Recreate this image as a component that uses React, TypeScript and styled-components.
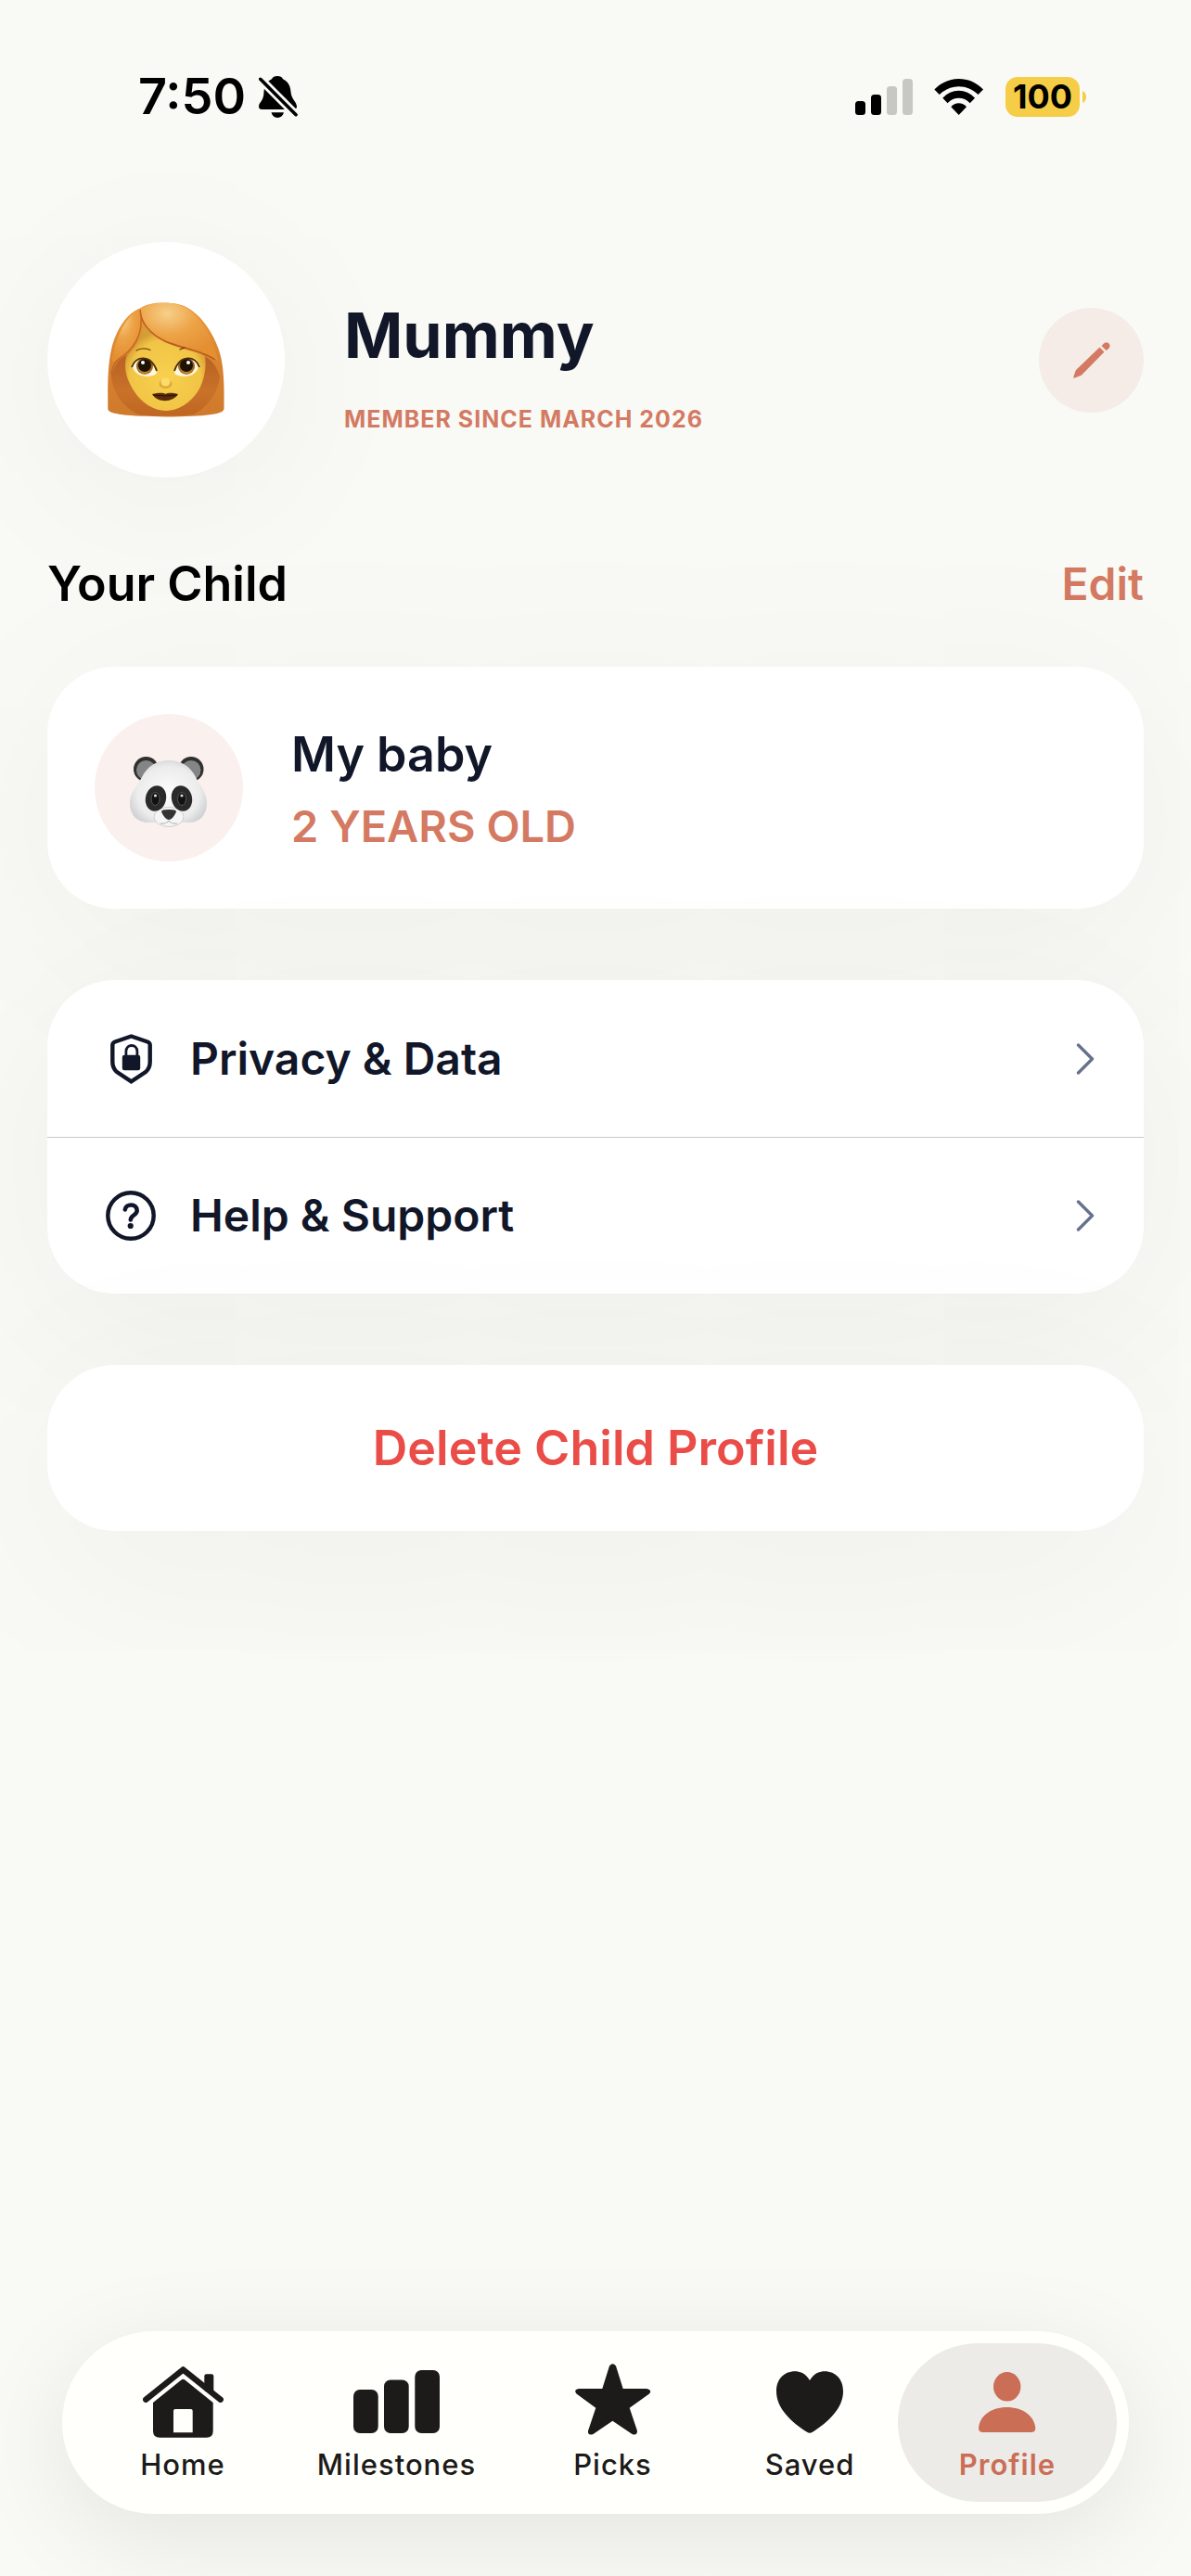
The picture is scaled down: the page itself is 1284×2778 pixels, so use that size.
import React from "react";
import styled, { createGlobalStyle } from "styled-components";

const color = {
  page: "#f9faf6",
  ink: "#111729",
  accent: "#d47a63",
  accentStrong: "#ca6e55",
  danger: "#ea4c48",
  muted: "#66728c",
  tab: "#1c1b19",
};

const GlobalStyle = createGlobalStyle`
  *, *::before, *::after { box-sizing: border-box; }
  body {
    margin: 0;
    background: ${color.page};
    font-family: Inter, "Liberation Sans", sans-serif;
    color: ${color.ink};
  }
  h1, h2, h3, p { margin: 0; }
  button {
    border: 0;
    padding: 0;
    background: none;
    font: inherit;
    color: inherit;
    cursor: pointer;
  }
  a { color: inherit; text-decoration: none; }
  svg { display: block; flex: none; }
`;

const Page = styled.div`
  min-height: 100vh;
  display: flex;
  flex-direction: column;
  overflow: hidden;
`;

const StatusBar = styled.header`
  display: flex;
  justify-content: space-between;
  align-items: center;
  padding: 72px 113px 0 149px;
  color: #000;
`;

const StatusGroup = styled.div<{ $gap: number }>`
  display: flex;
  align-items: center;
  gap: ${(p) => p.$gap}px;
`;

const Clock = styled.time`
  font-size: 54px;
  line-height: 64px;
  font-weight: 600;
`;

const Battery = styled.div`
  display: flex;
  align-items: center;
  gap: 3px;
`;

const BatteryLevel = styled.span`
  width: 80px;
  border-radius: 13px;
  background: #f6cd46;
  font-size: 36px;
  line-height: 43px;
  font-weight: 700;
  text-align: center;
`;

const Content = styled.main`
  flex: 1;
  padding: 125px 51px 80px;
`;

const ProfileRow = styled.section`
  display: flex;
  align-items: center;
  gap: 64px;
`;

const Avatar = styled.div`
  display: grid;
  place-items: center;
  flex: none;
  width: 256px;
  height: 254px;
  border-radius: 50%;
  background: #fff;
  box-shadow: 0 24px 180px rgba(0, 0, 0, 0.05);
`;

const ProfileText = styled.div`
  flex: 1;
  display: flex;
  flex-direction: column;
  gap: 28px;
`;

const Name = styled.h1`
  font-size: 68px;
  line-height: 100px;
  font-weight: 700;
`;

const Since = styled.p`
  font-size: 25px;
  line-height: 26px;
  font-weight: 700;
  letter-spacing: 1px;
  text-transform: uppercase;
  color: ${color.accent};
`;

const RoundButton = styled.button`
  display: grid;
  place-items: center;
  width: 113px;
  height: 113px;
  border-radius: 50%;
  background: #f5ece8;
  color: ${color.accent};
`;

const SectionHead = styled.div`
  display: flex;
  justify-content: space-between;
  align-items: center;
  margin: 83px 0 57px;
`;

const SectionTitle = styled.h2`
  font-size: 52px;
  line-height: 64px;
  font-weight: 600;
  color: #000;
`;

const TextButton = styled.button`
  font-size: 48px;
  line-height: 64px;
  font-weight: 600;
  color: ${color.accent};
`;

const Stack = styled.div`
  display: flex;
  flex-direction: column;
  gap: 77px;
`;

const Card = styled.section`
  border-radius: 72px;
  background: #fff;
  box-shadow: 0 36px 220px rgba(0, 0, 0, 0.05);
`;

const ChildCard = styled(Card)`
  display: flex;
  align-items: center;
  gap: 52px;
  padding: 51px;
`;

const ChildAvatar = styled.div`
  display: grid;
  place-items: center;
  width: 160px;
  height: 159px;
  border-radius: 50%;
  background: #faf0ee;
`;

const ChildName = styled.h3`
  font-size: 52px;
  line-height: 82px;
  font-weight: 600;
`;

const ChildAge = styled.p`
  font-size: 47px;
  line-height: 72px;
  font-weight: 600;
  text-transform: uppercase;
  color: ${color.accent};
`;

const MenuRow = styled.a`
  display: flex;
  align-items: center;
  gap: 37px;
  min-height: 169px;
  padding: 0 53px 0 63px;
  font-size: 48px;
  line-height: 64px;
  font-weight: 600;

  & + & {
    border-top: 1px solid #c6c8ca;
  }
`;

const MenuIcon = styled.span`
  display: grid;
  place-items: center;
  width: 54px;
`;

const MenuLabel = styled.span`
  flex: 1;
`;

const DeleteButton = styled.button`
  width: 100%;
  border-radius: 72px;
  font-size: 52px;
  line-height: 179px;
  font-weight: 600;
  color: ${color.danger};
`;

const TabBar = styled.nav`
  position: sticky;
  bottom: 67px;
  display: grid;
  grid-template-columns: 230fr 231fr 235fr 190fr 236fr;
  margin: 0 67px 67px;
  padding: 13px 13px 13px 15px;
  border-radius: 99px;
  background: #fffffb;
  box-shadow: 0 24px 110px rgba(0, 0, 0, 0.09);
`;

const Tab = styled.a<{ $active?: boolean }>`
  display: flex;
  flex-direction: column;
  align-items: center;
  gap: 9px;
  padding: 22px 0;
  border-radius: 86px;
  background: ${(p) => (p.$active ? "#ecebe8" : "transparent")};
  color: ${(p) => (p.$active ? color.accentStrong : color.tab)};
  font-size: 31px;
  line-height: 36px;
  font-weight: ${(p) => (p.$active ? 600 : 500)};
  letter-spacing: 1px;
`;

const TabIcon = styled.span`
  display: grid;
  place-items: center;
  height: 82px;
`;

const BellOff = () => (
  <svg width="42" height="45" viewBox="0 0 42 45" role="img" aria-label="Silent">
    <path
      fill="currentColor"
      d="M20 0C23 0 25 1.2 26 3.2C32 6 34 11 34.5 17C35 25 41 28 41 33Q41 36 37 36H3.5Q0 36 0 33C0 28 5.5 27 5.5 17C6 11 8 6 14 3.2C15 1.2 17 0 20 0ZM13.5 39.3H27C26 43 23.500 45 20.200 45S14.500 43 13.500 39.300Z"
    />
    <path d="M1.700 3.300L40 41.700" stroke={color.page} strokeWidth="9" />
    <path d="M1.700 3.300L40 41.700" stroke="currentColor" strokeWidth="3.600" strokeLinecap="round" />
  </svg>
);

const Signal = () => (
  <svg width="62" height="39" viewBox="0 0 62 39" role="img" aria-label="Signal">
    <rect x="0" y="24" width="11" height="15" rx="3.500" />
    <rect x="17" y="17" width="11" height="22" rx="3.500" />
    <rect x="34" y="8" width="11" height="31" rx="3.500" fill="#c7c8c4" />
    <rect x="51" y="0" width="11" height="39" rx="3.500" fill="#c7c8c4" />
  </svg>
);

const Wifi = () => (
  <svg width="54" height="39" viewBox="0 0 54 39" role="img" aria-label="Wi-Fi">
    <path d="M.3 11.500C15-3.800 38.300-3.800 53 11.500L47.500 17C36 5.200 17.300 5.200 5.800 17Z" />
    <path d="M9.300 20.800C18.500 10 34.800 10 44 20.800L38.700 26.300C32 19 21.300 19 14.600 26.300Z" />
    <path d="M18.300 30.200C22.500 25 30.800 25 35 30.200L26.700 39Z" />
  </svg>
);

const BatteryNub = () => (
  <svg width="4" height="13" viewBox="0 0 4 13" aria-hidden="true">
    <path fill="#f6cd46" d="M0 0C2.500 1 4 3.500 4 6.500S2.500 12 0 13Z" />
  </svg>
);

const WomanFace = () => (
  <svg width="126" height="124" viewBox="0 0 126 124" role="img" aria-label="Woman with red hair">
    <defs>
      <linearGradient id="hairBack" x1="0" y1="0" x2="0" y2="1">
        <stop offset="0" stopColor="#ec9c3c" />
        <stop offset=".5" stopColor="#d9822f" />
        <stop offset="1" stopColor="#cf7a2c" />
      </linearGradient>
      <linearGradient id="hairShade" x1="0" y1="0" x2="0" y2="1">
        <stop offset="0" stopColor="#ad5420" />
        <stop offset=".6" stopColor="#c56e28" />
        <stop offset="1" stopColor="#b9601f" />
      </linearGradient>
      <radialGradient id="skin" cx=".5" cy=".6" r=".55">
        <stop offset="0" stopColor="#f8d04e" />
        <stop offset=".8" stopColor="#f1c446" />
        <stop offset="1" stopColor="#d59d33" />
      </radialGradient>
      <radialGradient id="fringe" cx=".35" cy=".18" r=".75">
        <stop offset="0" stopColor="#f6d08a" />
        <stop offset=".5" stopColor="#eda347" />
        <stop offset="1" stopColor="#e58f33" />
      </radialGradient>
      <radialGradient id="iris" cx=".5" cy=".7" r=".6">
        <stop offset="0" stopColor="#d49a3e" />
        <stop offset="1" stopColor="#8a5518" />
      </radialGradient>
    </defs>
    <path
      fill="url(#hairBack)"
      d="M36 6C44-1 76-2 88 7C106 18 122 46 124 70C126 86 125.500 102 125.500 115C125 121 105 123 63 123.500C22 123 0 121 .3 115C.3 95-.5 72 4 51C9 30 20 12 36 6Z"
    />
    <path fill="url(#hairShade)" d="M4 80C8 64 15 56 30 56H96C108 58 116 64 121 80C119 100 104 116 92 121C74 123 50 123 34 121C20 116 6 100 4 80Z" opacity=".75" />
    <path fill="url(#skin)" d="M38 26C60 34 84 44 105 58C107 70 104 85 98 95C90 108 76 117 63 117S36 108 28 95C21 84 17 72 20 59C28 50 36 42 38 26Z" />
    <path fill="url(#fringe)" d="M35 8C42 0 76-4 90 10C106 23 114 42 119 63C106 54 76 52 58 41C48 36 36 26 35 8Z" />
    <path fill="none" stroke="#b65b1c" strokeWidth="1.500" d="M35 8C36 26 50 36 62 42C78 49 102 52 116 62" />
    <path fill="url(#fringe)" d="M35 8C24 10 10 32 5 60C4 66 8 64 12 61C24 54 42 38 35 8Z" />
    <path fill="none" stroke="#bd6420" strokeWidth="1.300" d="M35 8C41 36 25 53 12 61C8 64 5 70 4 78" />
    <path fill="none" stroke="#7a4a12" strokeWidth="1.300" strokeLinecap="round" d="M31 52C35 49.500 42 49 46 51.500M78 51Q80 49.500 83 49" />
    {[
      { x: 40, flip: 1 },
      { x: 85, flip: -1 },
    ].map((eye) => (
      <g key={eye.x} transform={`translate(${eye.x} 69) scale(${eye.flip} 1)`}>
        <path fill="#fff8e0" d="M-13 1C-10-12 8-13 13 7C11 12-9 14-13 1Z" />
        <circle cx="0" cy="0" r="9" fill="url(#iris)" />
        <circle cx="0" cy="-1" r="7" fill="#1e1204" />
        <circle cx="-2" cy="-4" r="2" fill="#fff" />
        <path fill="none" stroke="#4a2c08" strokeWidth="1.800" d="M-14 1C-10-12 7-13 13 5" />
      </g>
    ))}
    <ellipse cx="62.500" cy="88" rx="7" ry="5" fill="#dfa937" />
    <ellipse cx="62.500" cy="86" rx="5" ry="4.500" fill="#fadb6c" />
    <path fill="#5b2c0c" d="M48 99C54 98 59 97 62.500 99C66 97 71 98 76 99C71 108 54 109 48 99Z" />
    <path fill="none" stroke="#2d1204" strokeWidth="1" d="M49 100Q62 102 75 100" />
  </svg>
);

const Panda = () => (
  <svg width="84" height="84" viewBox="0 -7 84 84" role="img" aria-label="Panda">
    <defs>
      <radialGradient id="pandaHead" cx=".5" cy=".5" r=".58">
        <stop offset="0" stopColor="#fdfdfd" />
        <stop offset=".7" stopColor="#ececec" />
        <stop offset="1" stopColor="#c9cbcd" />
      </radialGradient>
    </defs>
    {[17.5, 66].map((x) => (
      <g key={x}>
        <circle cx={x} cy="14.500" r="13.500" fill="#2f3030" />
        <circle cx={x} cy="15.500" r="10.500" fill="#858585" />
      </g>
    ))}
    <path
      fill="url(#pandaHead)"
      d="M42 5C55 5 65 11 71 23C76 33 83 40 83 51C83 64 75 72 64 72H56C52 73 48 76.700 42 76.700S32 73 28 72H20C8 72 0 64 0 51C0 40 8 33 13 23C19 11 29 5 42 5Z"
    />
    <ellipse cx="42" cy="66" rx="16" ry="10.500" fill="#f5f5f5" stroke="#cfcfcf" strokeWidth="1" />
    <ellipse cx="28" cy="46" rx="11" ry="14" fill="#2a2a2a" transform="rotate(14 28 46)" />
    <ellipse cx="56" cy="46" rx="11" ry="14" fill="#2a2a2a" transform="rotate(-14 56 46)" />
    {[27.5, 56].map((x) => (
      <g key={x}>
        <ellipse cx={x} cy="46.500" rx="4.500" ry="7" fill="#111" stroke="#555" strokeWidth="1" />
        <circle cx={x} cy="43" r="1.600" fill="#ddd" />
      </g>
    ))}
    <path fill="#333" d="M34 60Q34 58 42 58T50 60C49 64 45 69 42 69S35 64 34 60Z" />
    <path fill="none" stroke="#b9b9b9" strokeWidth="1.200" d="M33 73Q39 74 42 70Q45 74 51 73" />
  </svg>
);

const Pencil = () => (
  <svg width="40" height="39" viewBox="0 0 40 39" fill="currentColor" aria-hidden="true">
    <path d="M28.500 5.500L33.500 10.500L9.500 35Q8.500 36 7 36.600L1 38.700Q0 38.600.3 37.500L2.500 31Q3 29.800 4 28.900Z" />
    <path d="M30.500 4L33 1.500Q35.800-.9 38.500 1.500Q40.700 4.200 38.400 6.700L35.700 9Z" />
  </svg>
);

const ShieldLock = () => (
  <svg width="45" height="54" viewBox="0 0 45 54" fill="none" stroke="currentColor" aria-hidden="true">
    <path
      strokeWidth="4.400"
      d="M22.500 2.500L40 8.500Q42.700 9.500 42.700 12V30C42.700 36 41 38.500 38 41L22.500 51.300L7 41C4 38.500 2.300 36 2.300 30V12Q2.300 9.500 5 8.500Z"
    />
    <path strokeWidth="2.800" d="M16.900 24V19C16.900 10.300 28.900 10.300 28.900 19V24" />
    <rect x="12.800" y="22.700" width="19.400" height="16.600" rx="2.400" fill="currentColor" stroke="none" />
  </svg>
);

const HelpCircle = () => (
  <svg width="54" height="54" viewBox="0 0 54 54" fill="none" stroke="currentColor" aria-hidden="true">
    <circle cx="27" cy="27" r="24.700" strokeWidth="4.400" />
    <path strokeWidth="4.600" strokeLinecap="round" d="M20.800 20.500C21.500 13.700 33.700 13.700 33.700 21.500C33.700 26.500 26.800 26.500 26.800 31.500" />
    <circle cx="26.700" cy="38" r="3.100" fill="currentColor" stroke="none" />
  </svg>
);

const Chevron = () => (
  <svg width="20" height="34" viewBox="0 0 20 34" fill="none" aria-hidden="true">
    <path d="M2.500 2L17.500 17L2.500 32" stroke={color.muted} strokeWidth="3.400" strokeLinecap="round" strokeLinejoin="round" />
  </svg>
);

const HomeIcon = () => (
  <svg width="87" height="77" viewBox="0 0 87 77" fill="currentColor" aria-hidden="true">
    <path d="M66.300 26V10.500Q66.300 8.300 68.500 8.300H74Q76.300 8.300 76.300 10.500V32Z" />
    <path fill="none" stroke="currentColor" strokeWidth="6.400" strokeLinecap="round" strokeLinejoin="round" d="M3.200 35.700L43.400 3.400L83.700 35.700" />
    <path fillRule="evenodd" d="M41.500 14.500Q43.400 13 45.300 14.500L75.700 39V69.500Q75.700 76.800 68.500 76.800H18.200Q11 76.800 11 69.500V39ZM35 46Q33 46 33 48V71.300H53.700V48Q53.700 46 51.700 46Z" />
  </svg>
);

const BarsIcon = () => (
  <svg width="93" height="69" viewBox="0 0 93 69" fill="currentColor" aria-hidden="true">
    <rect x="0" y="21" width="26.700" height="47" rx="7" />
    <rect x="33" y="10.500" width="26.700" height="57.500" rx="7" />
    <rect x="66.300" y="0" width="26.700" height="68" rx="7" />
  </svg>
);

const StarIcon = () => (
  <svg width="82" height="83" viewBox="0 0 82 83" fill="currentColor" aria-hidden="true">
    <path d="M37 2.500Q40.500-2 44 2.500L51.700 27H77Q83.500 28.500 80 32.500L58.700 47.700L67 72.500Q67 78 61.500 76L40.400 61.700L19.500 76Q13.500 78 14 72.500L22.300 47.700L1.500 32.500Q-2 28 4 27H29.300Z" />
  </svg>
);

const HeartIcon = () => (
  <svg width="72" height="67" viewBox="0 0 72 67" fill="currentColor" aria-hidden="true">
    <path d="M36 10C41 2 47 .3 52 .3C64 .3 72 9 72 22C72 40 56 55 39 65.800Q36 67.500 33 65.800C16 55 0 40 0 22C0 9 8 .3 20 .3C25 .3 31 2 36 10Z" />
  </svg>
);

const PersonIcon = () => (
  <svg width="62" height="65" viewBox="0 0 62 65" fill="currentColor" aria-hidden="true">
    <ellipse cx="30.700" cy="15.800" rx="14.700" ry="15.800" />
    <path d="M5 65Q0 65 0 60.500C1 47 14 38 30.600 38S60 47 61.300 60.500Q61.300 65 56.500 65Z" />
  </svg>
);

const menu = [
  { label: "Privacy & Data", icon: <ShieldLock /> },
  { label: "Help & Support", icon: <HelpCircle /> },
];

const tabs = [
  { label: "Home", icon: <HomeIcon /> },
  { label: "Milestones", icon: <BarsIcon /> },
  { label: "Picks", icon: <StarIcon /> },
  { label: "Saved", icon: <HeartIcon /> },
  { label: "Profile", icon: <PersonIcon />, active: true },
];

export default function App() {
  return (
    <>
      <GlobalStyle />
      <Page>
        <StatusBar>
          <StatusGroup $gap={14}>
            <Clock>7:50</Clock>
            <BellOff />
          </StatusGroup>
          <StatusGroup $gap={23}>
            <Signal />
            <Wifi />
            <Battery>
              <BatteryLevel>100</BatteryLevel>
              <BatteryNub />
            </Battery>
          </StatusGroup>
        </StatusBar>

        <Content>
          <ProfileRow>
            <Avatar>
              <WomanFace />
            </Avatar>
            <ProfileText>
              <Name>Mummy</Name>
              <Since>Member since March 2026</Since>
            </ProfileText>
            <RoundButton aria-label="Edit profile">
              <Pencil />
            </RoundButton>
          </ProfileRow>

          <SectionHead>
            <SectionTitle>Your Child</SectionTitle>
            <TextButton>Edit</TextButton>
          </SectionHead>

          <Stack>
            <ChildCard>
              <ChildAvatar>
                <Panda />
              </ChildAvatar>
              <div>
                <ChildName>My baby</ChildName>
                <ChildAge>2 years old</ChildAge>
              </div>
            </ChildCard>

            <Card>
              {menu.map((item) => (
                <MenuRow key={item.label} href="#">
                  <MenuIcon>{item.icon}</MenuIcon>
                  <MenuLabel>{item.label}</MenuLabel>
                  <Chevron />
                </MenuRow>
              ))}
            </Card>

            <Card>
              <DeleteButton>Delete Child Profile</DeleteButton>
            </Card>
          </Stack>
        </Content>

        <TabBar aria-label="Main">
          {tabs.map((tab) => (
            <Tab key={tab.label} href="#" $active={tab.active} aria-current={tab.active ? "page" : undefined}>
              <TabIcon>{tab.icon}</TabIcon>
              {tab.label}
            </Tab>
          ))}
        </TabBar>
      </Page>
    </>
  );
}
